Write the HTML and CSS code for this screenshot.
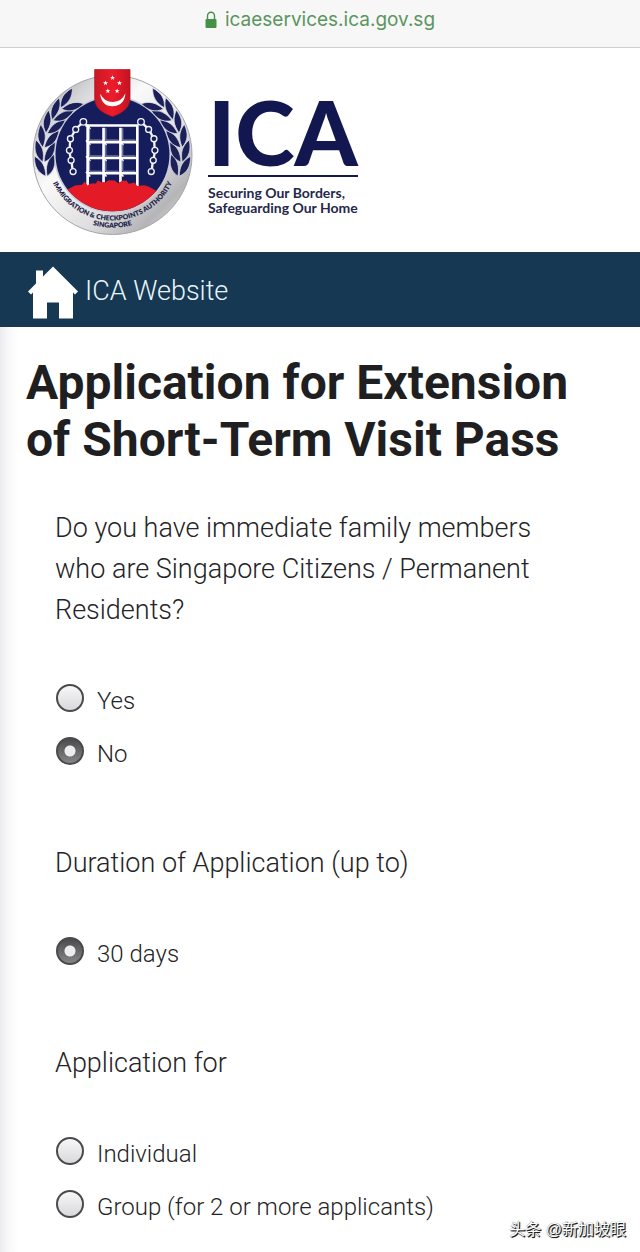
FILE: index.html
```html
<!DOCTYPE html>
<html lang="en">
<head>
<meta charset="utf-8">
<meta name="viewport" content="width=device-width, initial-scale=1">
<title>Application for Extension of Short-Term Visit Pass</title>
<link rel="stylesheet" href="styles.css">
</head>
<body>
<div class="address-bar">
  <svg class="lock" viewBox="0 0 12 18" aria-hidden="true"><path d="M2.5 9V5a3.5 3.8 0 0 1 7 0v4" fill="none" stroke="#459149" stroke-width="1.4"/><rect x="0.5" y="8" width="11" height="9" rx="1" fill="#459149"/></svg>
  <span>icaeservices.ica.gov.sg</span>
</div>

<header class="brand">
  <svg class="emblem" viewBox="32 30 492 516" role="img" aria-label="Immigration &amp; Checkpoints Authority Singapore">
    <defs>
      <linearGradient id="silver" x1="0" y1="0" x2="1" y2="1">
        <stop offset="0" stop-color="#8e8e91"/><stop offset=".2" stop-color="#d4d4d6"/><stop offset=".38" stop-color="#fafafa"/><stop offset=".65" stop-color="#dedee0"/><stop offset=".82" stop-color="#b5b5b8"/><stop offset="1" stop-color="#eeeeef"/>
      </linearGradient>
      <linearGradient id="shield" x1="0" x2="1"><stop offset="0" stop-color="#c91824"/><stop offset=".5" stop-color="#ee1c2b"/><stop offset="1" stop-color="#c31420"/></linearGradient>
      <clipPath id="disc"><circle cx="278" cy="295" r="172"/></clipPath>
      <path id="star" d="M0-8 2-2.5 7.6-2.5 3.1 1 4.7 6.5 0 3.1-4.7 6.5-3.1 1-7.6-2.5-2-2.5Z"/>
      <g id="pair">
        <path d="M71 340C48 326 40 308 43 276 66 292 73 310 71 340Z"/>
        <path d="M75 340C99 326 106 308 102 276 80 292 73 310 75 340Z"/>
      </g>
      <g id="branch" fill="#1b2158" stroke="#e4e4ee" stroke-width="2">
        <use href="#pair" transform="rotate(-6 278 297)"/>
        <use href="#pair" transform="rotate(6 278 297)"/>
        <use href="#pair" transform="rotate(18 278 297)"/>
        <use href="#pair" transform="rotate(30 278 297)"/>
        <use href="#pair" transform="rotate(42 278 297)"/>
        <use href="#pair" transform="rotate(54 278 297)"/>
      </g>
      <g id="chain" fill="none" stroke="#f4f5fb" stroke-width="4">
        <circle cx="190" cy="197" r="10"/><circle cx="167" cy="220" r="9"/><circle cx="151" cy="248" r="9"/><circle cx="148" cy="283" r="9"/><circle cx="153" cy="313" r="9"/><circle cx="159" cy="347" r="9"/>
        <path stroke-width="7" d="M183 204l-10 9M162 228l-6 11M150 257l-1 17M149 292l2 12M155 322l2 16"/>
      </g>
      <path id="arc-name" d="M78 295A200 200 0 0 0 478 295"/>
      <path id="arc-country" d="M150 476A222 222 0 0 0 406 476"/>
    </defs>
    <circle cx="278" cy="297" r="240" fill="url(#silver)" stroke="#a4a4a7" stroke-width="3"/>
    <circle cx="278" cy="295" r="177" fill="#cccdd6"/>
    <circle cx="278" cy="295" r="172" fill="#161d5c"/>
    <use href="#branch"/>
    <use href="#branch" transform="translate(556 0) scale(-1 1)"/>
    <g stroke="#fff" fill="none">
      <path stroke-width="8" d="M196 208H357M353 204V394M203 208V392"/>
      <path stroke-width="8" d="M251 215V380M302 215V380M203 258H350M203 306H350M203 352H350"/>
      <g stroke-width="5">
        <path d="M198 204l13 15M198 253l13 14M198 301l13 14M198 348l13 14M247 253l13 14M247 301l13 14M247 348l13 14M298 253l13 14M298 301l13 14M298 348l13 14"/>
      </g>
      <path stroke="#989dbd" stroke-width="3" d="M209 216V252H245M258 216V252H296M309 216V252H347M209 265V300H245M258 265V300H296M309 265V300H347M209 313V346H245M258 313V346H296M309 313V346H347"/>
    </g>
    <use href="#chain"/>
    <use href="#chain" transform="translate(554 0) scale(-1 1)"/>
    <path clip-path="url(#disc)" fill="#e41a26" d="M100 400H145L165 389 186 387 194 377 202 389 212 383 228 383 233 374 245 379 257 380 265 373 285 374 295 382 307 375 320 374 327 384 346 380 352 391 374 388 390 394 415 408H450V480H100Z"/>
    <path d="M224 39H331V126Q331 164 278 181 224 164 224 126Z" fill="url(#shield)" stroke="#aa1420" stroke-width="2"/>
    <path d="M241 112Q244 149 278 150 314 149 317 111 306 137 279 137 253 137 241 112Z" fill="#fff"/>
    <g fill="#fff"><use href="#star" x="278" y="64"/><use href="#star" x="257" y="80"/><use href="#star" x="299" y="80"/><use href="#star" x="264" y="104"/><use href="#star" x="292" y="104"/></g>
    <g class="emblem-text" text-anchor="middle">
      <text><textPath href="#arc-name" startOffset="50%">IMMIGRATION &amp; CHECKPOINTS AUTHORITY</textPath></text>
      <text><textPath href="#arc-country" startOffset="50%">SINGAPORE</textPath></text>
    </g>
  </svg>
  <div class="wordmark">
    <div class="wordmark-name">ICA</div>
    <p class="tagline">Securing Our Borders,<br>Safeguarding Our Home</p>
  </div>
</header>

<nav class="site-nav">
  <a class="home-link" href="#">
    <svg class="home-icon" viewBox="0 0 50 52" aria-hidden="true"><path fill="#fff" d="M25 0 50 25 47 28 45 26V52H31V36H19V52H5V26L3 28 0 25 8 17V4H15V10Z"/></svg>
    <span>ICA Website</span>
  </a>
</nav>

<main class="page">
  <h1>Application for Extension of Short-Term Visit Pass</h1>
  <form class="questions">
    <fieldset>
      <legend>Do you have immediate family members who are Singapore Citizens / Permanent Residents?</legend>
      <div class="option"><input type="radio" id="family-yes" name="family"><label for="family-yes">Yes</label></div>
      <div class="option"><input type="radio" id="family-no" name="family" checked><label for="family-no">No</label></div>
    </fieldset>
    <fieldset>
      <legend>Duration of Application (up to)</legend>
      <div class="option"><input type="radio" id="days-30" name="duration" checked><label for="days-30">30 days</label></div>
    </fieldset>
    <fieldset>
      <legend>Application for</legend>
      <div class="option"><input type="radio" id="individual" name="applicant"><label for="individual">Individual</label></div>
      <div class="option"><input type="radio" id="group" name="applicant"><label for="group">Group (for 2 or more applicants)</label></div>
    </fieldset>
  </form>
  <div class="watermark" lang="zh">头条 @新加坡眼</div>
</main>
</body>
</html>
```

FILE: styles.css
```css
* { box-sizing: border-box; }

body {
  margin: 0;
  background: #fff;
  color: #242426;
  font-family: Roboto, "Liberation Sans", sans-serif;
  font-weight: 300;
}

.address-bar {
  display: flex;
  align-items: center;
  justify-content: center;
  gap: 8px;
  height: 48px;
  padding-bottom: 7px;
  background: #f7f7f7;
  border-bottom: 1px solid #cfcfcf;
  color: #5b955f;
  font: 400 19px/24px Inter, "Liberation Sans", sans-serif;
}

.lock { width: 12px; height: 18px; }

.brand {
  display: flex;
  align-items: flex-start;
  gap: 14px;
  padding: 18px 31px 14px;
}

.emblem { width: 163px; height: 172px; flex: none; }

.emblem-text {
  fill: #1f2449;
  font-family: Lato, sans-serif;
  font-size: 21px;
  font-weight: 800;
}

.wordmark {
  padding-top: 30px;
  color: #12184f;
  font-family: Lato, sans-serif;
}

.wordmark-name {
  height: 81px;
  border-bottom: 2px solid #12184f;
  font-size: 90px;
  font-weight: 900;
  line-height: 70px;
}

.tagline {
  margin: 8px 0 0;
  color: #25284a;
  font-size: 14px;
  font-weight: 700;
  line-height: 15px;
}

.site-nav {
  padding: 14px 28px 8px;
  background: #163852;
}

.home-link {
  display: flex;
  align-items: center;
  gap: 7px;
  color: #e6f5fa;
  font-size: 27px;
  line-height: 30px;
  text-decoration: none;
}

.home-link span { padding-bottom: 4px; }

.home-icon { width: 50px; height: 53px; }

.page {
  position: relative;
  padding: 27px 26px 22px;
  background: linear-gradient(to right, #ececef, #f8f7f9 8px, #fff 18px);
}

h1 {
  margin: 0 0 40px;
  color: #1f1e20;
  font-size: 48px;
  font-weight: 700;
  line-height: 57px;
}

.questions {
  display: flex;
  flex-direction: column;
  gap: 66px;
  padding: 0 29px;
}

fieldset {
  min-width: 0;
  margin: 0;
  padding: 0;
  border: 0;
}

legend {
  margin-bottom: 40px;
  padding: 0;
  font-size: 27px;
  line-height: 41px;
}

.option {
  display: flex;
  align-items: center;
  gap: 13px;
  height: 53px;
}

.option label {
  padding-top: 7px;
  font-size: 24px;
  line-height: 30px;
}

input[type="radio"] {
  flex: none;
  width: 28px;
  height: 28px;
  margin: 0 0 0 1px;
  appearance: none;
  border: 2px solid #4a4a4c;
  border-radius: 50%;
  background: linear-gradient(#f7f7f8, #d9d9dc);
}

input[type="radio"]:checked {
  background: radial-gradient(circle, #ededed 0 5px, transparent 6px), linear-gradient(#4b4b4d, #858587);
}

.watermark {
  position: absolute;
  right: 14px;
  bottom: 10px;
  color: #fff;
  font: 400 16px/24px "Liberation Sans", "Noto Sans CJK SC", sans-serif;
  text-shadow: 1px 1px 0 #1c1c1c, 1px 1px 1px #333, 0 0 1px #555;
}
```
